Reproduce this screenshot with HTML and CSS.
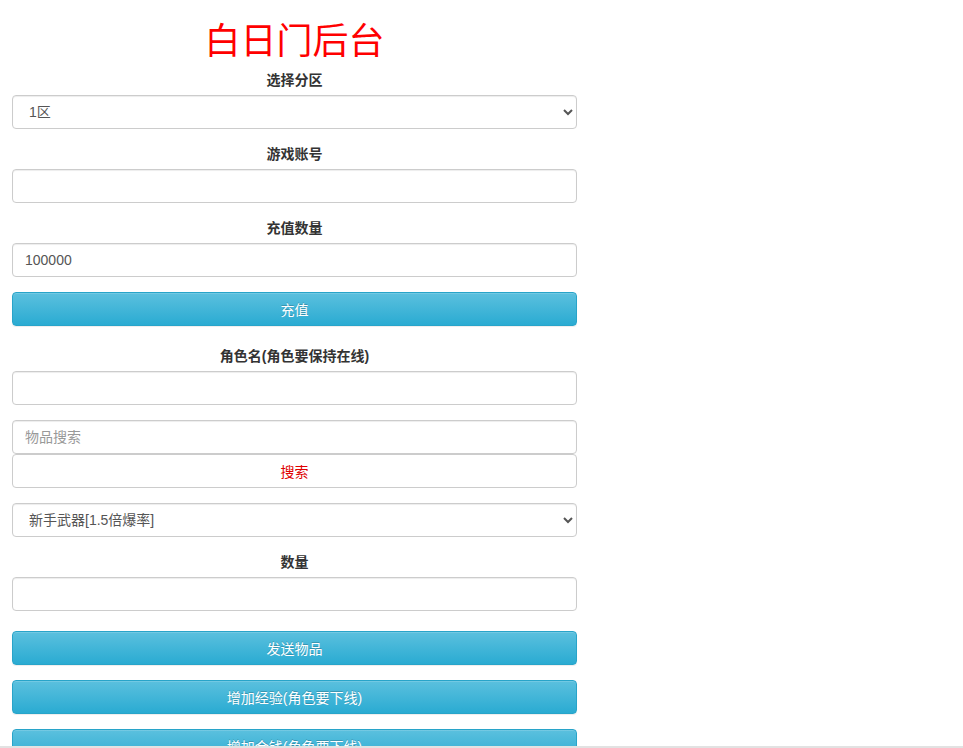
FILE: index.html
```html
<!DOCTYPE html>
<html lang="zh-CN">
<head>
<meta charset="utf-8">
<title>白日门后台</title>
<link rel="stylesheet" href="styles.css">
</head>
<body>
<div class="wrap">
  <h1 class="title">白日门后台</h1>

  <div class="group">
    <label class="lbl">选择分区</label>
    <select class="ctrl sel">
      <option>1区</option>
    </select>
  </div>

  <div class="group">
    <label class="lbl">游戏账号</label>
    <input class="ctrl" type="text">
  </div>

  <div class="group">
    <label class="lbl">充值数量</label>
    <input class="ctrl" type="text" value="100000">
  </div>

  <div class="group gap20">
    <button class="btn">充值</button>
  </div>

  <div class="group">
    <label class="lbl">角色名(角色要保持在线)</label>
    <input class="ctrl" type="text">
  </div>

  <div class="group">
    <input class="ctrl" type="text" placeholder="物品搜索">
    <button class="btn-search">搜索</button>
  </div>

  <div class="group">
    <select class="ctrl sel">
      <option>新手武器[1.5倍爆率]</option>
    </select>
  </div>

  <div class="group gap20">
    <label class="lbl">数量</label>
    <input class="ctrl" type="text">
  </div>

  <div class="group">
    <button class="btn">发送物品</button>
  </div>

  <div class="group">
    <button class="btn">增加经验(角色要下线)</button>
  </div>

  <div class="group">
    <button class="btn">增加金钱(角色要下线)</button>
  </div>
</div>
<div class="bottom-edge"></div>
</body>
</html>
```

FILE: styles.css
```css
html, body {
  margin: 0;
  padding: 0;
  background: #fff;
}

body {
  font-family: "Liberation Sans", "Noto Sans CJK SC", sans-serif;
  font-size: 14px;
  color: #333;
}

.wrap {
  width: 565px;
  padding: 0 12px;
}

.title {
  margin: 0;
  padding-top: 19px;
  height: 70px;
  box-sizing: border-box;
  text-align: center;
  font-family: "Noto Sans CJK SC", sans-serif;
  font-weight: normal;
  font-size: 36px;
  line-height: 38px;
  color: #ff0000;
}

.group {
  display: flex;
  flex-direction: column;
  margin-bottom: 15px;
}

.group.gap20 {
  margin-bottom: 20px;
}

.lbl {
  display: block;
  text-align: center;
  font-weight: bold;
  font-size: 14px;
  line-height: 20px;
  margin-bottom: 5px;
  color: #333;
}

.ctrl {
  display: block;
  box-sizing: border-box;
  width: 100%;
  height: 34px;
  margin: 0;
  padding: 0 12px;
  border: 1px solid #ccc;
  border-radius: 4px;
  background: #fff;
  color: #555;
  font-family: "Liberation Sans", "Noto Sans CJK SC", sans-serif;
  font-size: 14px;
  box-shadow: inset 0 1px 1px rgba(0, 0, 0, 0.075);
  outline: none;
}

.ctrl::placeholder {
  color: #999;
}

.sel {
  padding: 0 12px;
}

.btn,
.btn-search {
  display: block;
  box-sizing: border-box;
  width: 100%;
  height: 34px;
  margin: 0;
  border-radius: 4px;
  font-family: "Liberation Sans", "Noto Sans CJK SC", sans-serif;
  font-size: 14px;
  cursor: pointer;
}

.btn {
  border: 1px solid #28a4c9;
  color: #fff;
  background: linear-gradient(to bottom, #5bc0de 0%, #2aabd2 100%);
  box-shadow: inset 0 1px 0 rgba(255, 255, 255, 0.15), 0 1px 1px rgba(0, 0, 0, 0.075);
  text-shadow: 0 -1px 0 rgba(0, 0, 0, 0.2);
}

.btn-search {
  border: 1px solid #ccc;
  background: #fff;
  color: #e00000;
}

.bottom-edge {
  position: fixed;
  left: 0;
  right: 0;
  bottom: 0;
  height: 2px;
  background: #e2e2e2;
}
```
